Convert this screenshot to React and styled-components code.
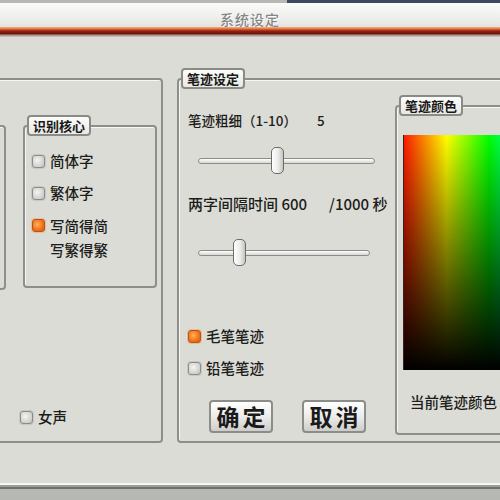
import React from 'react';
import styled, { createGlobalStyle } from 'styled-components';

const GlobalStyle = createGlobalStyle`
    html, body {
        margin: 0;
        padding: 0;
        background: #dcdcd6;
    }
    * {
        box-sizing: border-box;
    }
`

const Window = styled.div`
    width: 500px;
    height: 500px;
    overflow: hidden;
    display: flex;
    flex-direction: column;
    background: #dcdcd6;
    font-family: "Noto Sans CJK SC", "DejaVu Sans", sans-serif;
    color: #1c1c1c;
`
const TopEdge = styled.div`
    height: 3px;
    background: linear-gradient(to right, #b8b8b6 0, #b8b8b6 287px, #3a4a60 287px);
`
const TitleBar = styled.div`
    height: 24px;
    display: flex;
    align-items: flex-end;
    justify-content: center;
    background: linear-gradient(#fbfbfa, #ecece9 70%, #e2e2de);
`
const Title = styled.span`
    font-size: 14px;
    font-weight: 500;
    line-height: 15px;
    color: #858585;
    letter-spacing: 1px;
    text-shadow: 1px 1px 0 #ffffff;
`
const TitleBand = styled.div`
    height: 10px;
    background: linear-gradient(
        #f2b48c 0,
        #e07446 18%,
        #9c1e0c 40%,
        #6a1808 65%,
        #a88c90 82%,
        #d2cdd0 100%
    );
`
const Main = styled.div`
    flex: 1;
    display: flex;
    gap: 14px;
    padding: 41px 0 40px;
`
const Panel = styled.div`
    position: relative;
    flex: none;
    width: ${p => p.$width}px;
    margin-left: ${p => p.$ml || 0}px;
    border: 2px solid #8e8e8b;
    border-radius: 4px;
    box-shadow: inset 1px 1px 0 #f6f6f2;
`
const Legend = styled.div`
    position: absolute;
    top: -12px;
    left: 2px;
    height: 21px;
    padding: 0 4px;
    display: flex;
    align-items: center;
    border: 2px solid #8a8a87;
    border-radius: 4px;
    background: linear-gradient(#fcfcfb, #e8e8e4);
    font-size: 13px;
    font-weight: 700;
    color: #181818;
    white-space: nowrap;
`
const LeftBody = styled.div`
    height: 100%;
    display: flex;
    flex-direction: column;
    justify-content: space-between;
    padding: 45px 4px 13px 0;
`
const GroupRow = styled.div`
    display: flex;
    gap: 17px;
`
const Group = styled.div`
    position: relative;
    flex: none;
    width: ${p => p.$width}px;
    height: ${p => p.$height}px;
    border: 2px solid #8e8e8b;
    border-radius: 4px;
    box-shadow: inset 1px 1px 0 #f6f6f2;
`
const RadioList = styled.div`
    display: flex;
    flex-direction: column;
    gap: 10px;
    padding: 23px 0 0 7px;
`
const RadioRow = styled.div`
    display: flex;
    align-items: flex-start;
    gap: 5px;
    margin-left: ${p => p.$ml || 0}px;
    margin-top: ${p => p.$mt || 0}px;
    font-size: 14.5px;
    font-weight: 500;
    line-height: ${p => p.$lh || 22}px;
`
const RadioBox = styled.span`
    flex: none;
    width: 13px;
    height: 13px;
    margin-top: 5px;
    border-radius: 3px;
    border: 1px solid ${p => (p.$on ? '#b4561a' : '#8c8c8a')};
    background: ${p =>
        p.$on
            ? 'radial-gradient(circle at 40% 40%, #ffb060, #f07018 60%, #d85a10)'
            : 'radial-gradient(circle at 40% 40%, #f4f4f2, #cfcfcc 70%, #b4b4b1)'};
    box-shadow: 0 0 0 1px ${p => (p.$on ? 'rgba(240,150,80,0.45)' : 'rgba(180,180,176,0.5)')};
`
const Lines = styled.span`
    display: flex;
    flex-direction: column;
`
const MidBody = styled.div`
    height: 100%;
    display: flex;
    padding: 0 0 6px 9px;
`
const Controls = styled.div`
    flex: none;
    width: 207px;
    display: flex;
    flex-direction: column;
    padding-top: 30px;
`
const Label = styled.div`
    font-size: ${p => p.$size}px;
    font-weight: 500;
    line-height: 20px;
    white-space: nowrap;
    margin-top: ${p => p.$mt || 0}px;
`
const Gap = styled.span`
    display: inline-block;
    width: ${p => p.$w}px;
`
const SliderWrap = styled.div`
    position: relative;
    width: ${p => p.$width}px;
    height: 28px;
    margin: ${p => p.$mt}px 0 0 10px;
    display: flex;
    align-items: center;
`
const Track = styled.div`
    width: 100%;
    height: 6px;
    border: 1px solid #8c8c89;
    border-radius: 3px;
    background: linear-gradient(#ffffff, #d6d6d2);
`
const Thumb = styled.div`
    position: absolute;
    top: 0;
    width: 13px;
    height: 27px;
    border: 1px solid #6c6c6a;
    border-radius: 5px;
    background: linear-gradient(to right, #ffffff, #ececea 55%, #c4c4c0);
`
const ButtonRow = styled.div`
    display: flex;
    gap: 29px;
    margin: 21px 0 0 21px;
`
const Button = styled.button`
    width: 64px;
    height: 33px;
    padding: 0 0 0 3px;
    border: 2px solid #8c8c89;
    border-radius: 4px;
    background: linear-gradient(#ffffff, #ececea 50%, #cdcdc9);
    font-family: "Noto Sans CJK SC", sans-serif;
    font-size: 23px;
    font-weight: 700;
    letter-spacing: 3px;
    color: #1a1a1a;
    line-height: 1;
`
const ColorGroup = styled(Group)`
    margin-top: 25px;
    height: auto;
    flex: 1;
    padding: 28px 0 0 6px;
`
const Spectrum = styled.div`
    width: 252px;
    height: 235px;
    border-left: 1px solid #3a2020;
    background:
        linear-gradient(rgba(0, 0, 0, 0), #000000),
        linear-gradient(to right, #ff1a00, #ffff00 17%, #00ff00 34%, #00ffff 50%, #0000ff 67%, #ff00ff 84%, #ff0000);
`
const ColorCaption = styled.div`
    margin: 22px 0 0 7px;
    font-size: 14.5px;
    font-weight: 500;
    line-height: 20px;
    white-space: nowrap;
`
const Footer = styled.div`
    height: 17px;
    background: linear-gradient(
        #f6f6f2 0,
        #f6f6f2 2px,
        #9c9e9c 2px,
        #9c9e9c 4px,
        #6e706e 4px,
        #6e706e 6px,
        #b6b8b4 6px
    );
`

const Slider = ({ width, left, mt }) => (
    <SliderWrap $width={width} $mt={mt}>
        <Track />
        <Thumb style={{ left }} />
    </SliderWrap>
)

const Radio = ({ on, children, ...rest }) => (
    <RadioRow {...rest}>
        <RadioBox $on={on} />
        {children}
    </RadioRow>
)

const App = () => {
    return (
        <Window>
            <GlobalStyle />
            <TopEdge />
            <TitleBar>
                <Title>系统设定</Title>
            </TitleBar>
            <TitleBand />
            <Main>
                <Panel $width={175} $ml={-12}>
                    <LeftBody>
                        <GroupRow>
                            <Group $width={16} $height={165} />
                            <Group $width={134} $height={163}>
                                <Legend>识别核心</Legend>
                                <RadioList>
                                    <Radio>简体字</Radio>
                                    <Radio>繁体字</Radio>
                                    <Radio on $lh={24}>
                                        <Lines>
                                            <span>写简得简</span>
                                            <span>写繁得繁</span>
                                        </Lines>
                                    </Radio>
                                </RadioList>
                            </Group>
                        </GroupRow>
                        <Radio $ml={30}>女声</Radio>
                    </LeftBody>
                </Panel>
                <Panel $width={345}>
                    <Legend>笔迹设定</Legend>
                    <MidBody>
                        <Controls>
                            <Label $size={13.5}>笔迹粗细（1-10）<Gap $w={20} />5</Label>
                            <Slider width={177} left={73} mt={17} />
                            <Label $size={15} $mt={19}>
                                两字间隔时间 600<Gap $w={22} />/1000 秒
                            </Label>
                            <Slider width={172} left={35} mt={25} />
                            <Radio on $mt={58}>毛笔笔迹</Radio>
                            <Radio $mt={10}>铅笔笔迹</Radio>
                            <ButtonRow>
                                <Button>确定</Button>
                                <Button>取消</Button>
                            </ButtonRow>
                        </Controls>
                        <ColorGroup>
                            <Legend>笔迹颜色</Legend>
                            <Spectrum />
                            <ColorCaption>当前笔迹颜色</ColorCaption>
                        </ColorGroup>
                    </MidBody>
                </Panel>
            </Main>
            <Footer />
        </Window>
    );
}

export default App;
